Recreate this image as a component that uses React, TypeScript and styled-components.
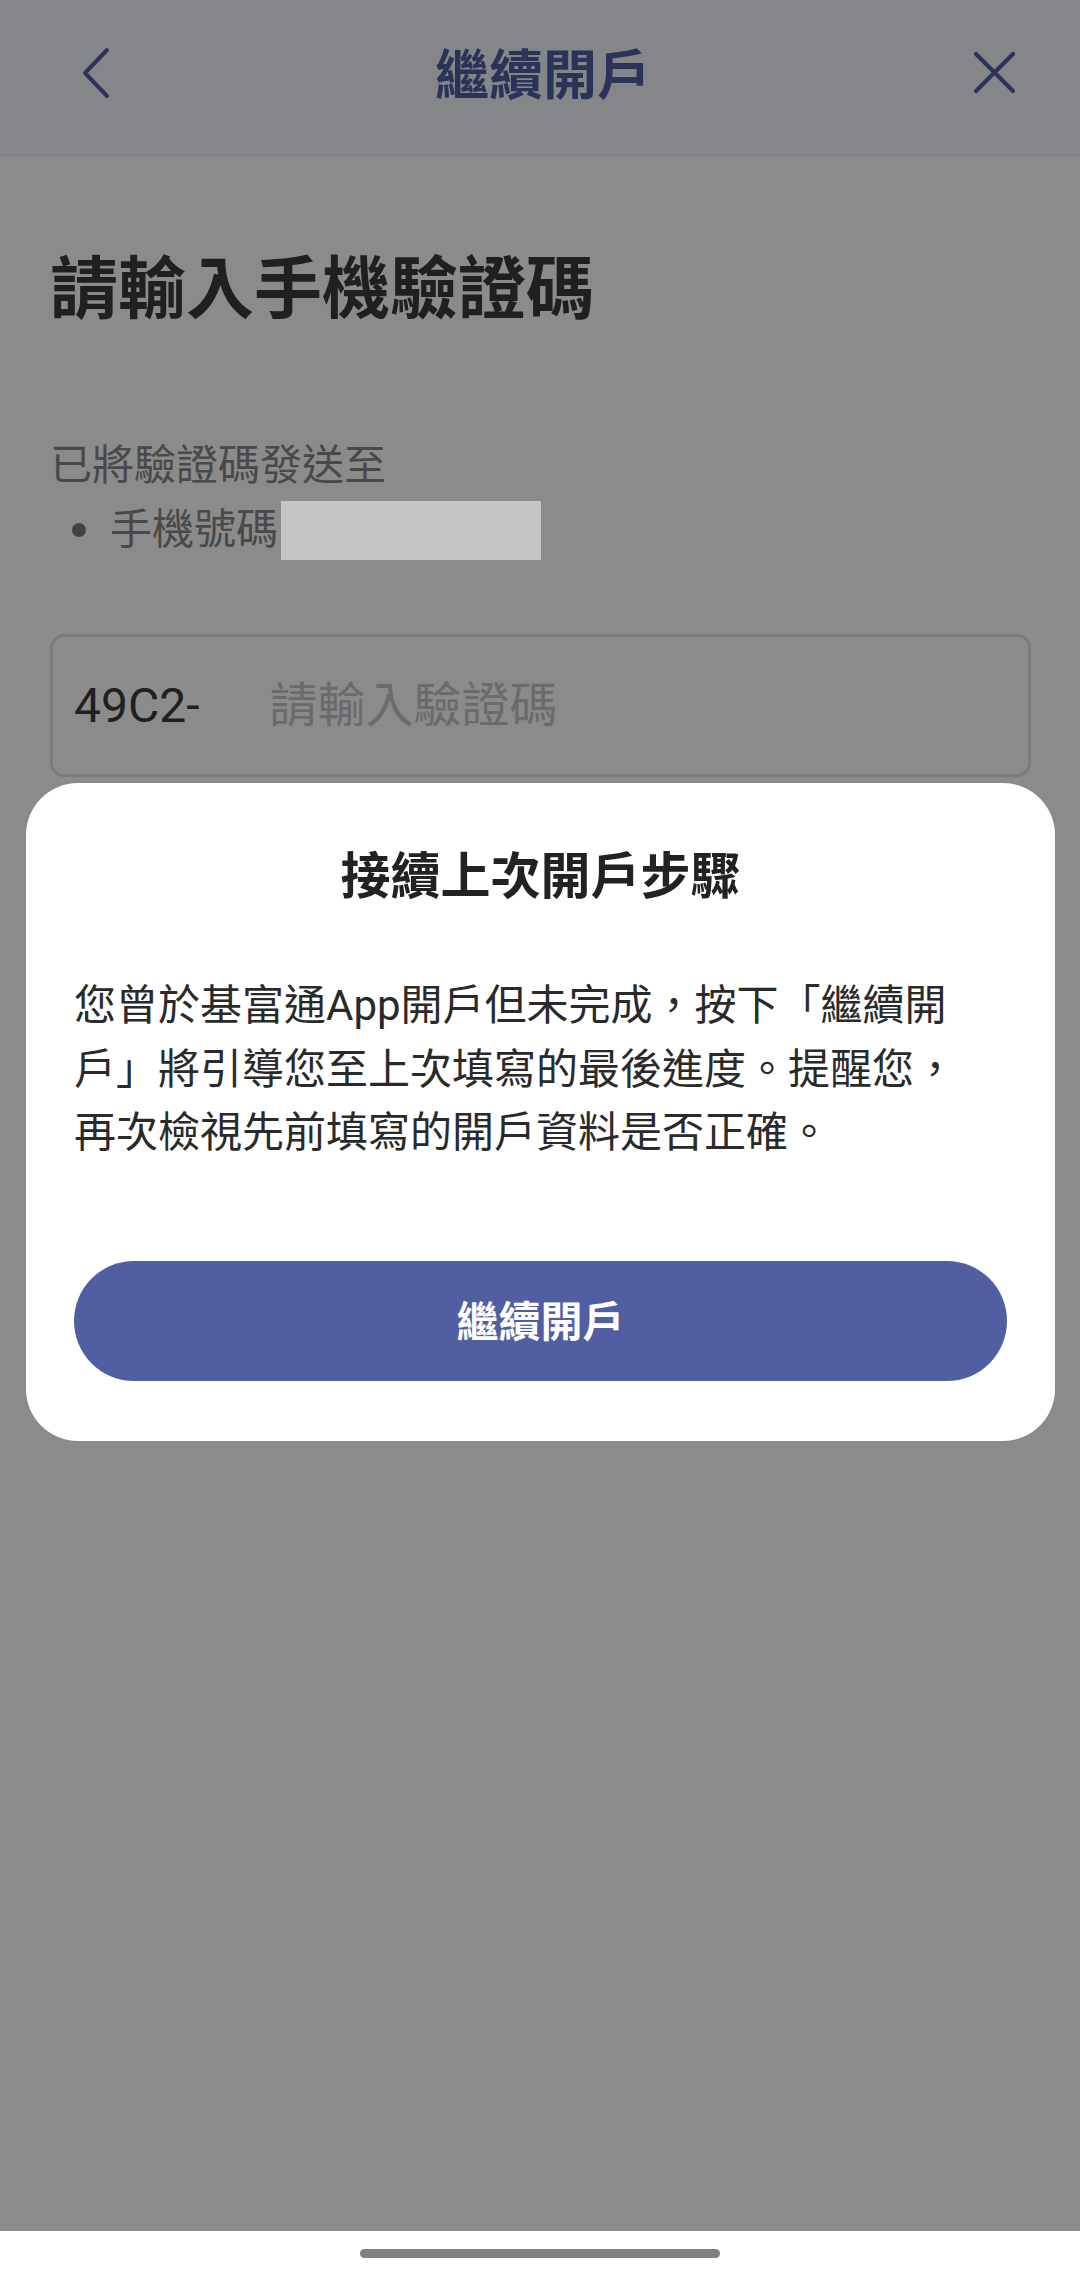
import styled, { createGlobalStyle } from "styled-components";

const GlobalStyle = createGlobalStyle`
    * { box-sizing: border-box; }
    body {
        margin: 0;
        font-family: Roboto, "Noto Sans CJK TC", sans-serif;
        background: #ffffff;
    }
`;

const Screen = styled.div`
    width: 1080px;
    height: 2279px;
    display: flex;
    flex-direction: column;
    overflow: hidden;
`;

const Page = styled.div`
    position: relative;
    height: 2231px;
    background: #ffffff;
    display: flex;
    flex-direction: column;
`;

const Header = styled.header`
    height: 156px;
    padding: 0 64px 10px 70px;
    display: grid;
    grid-template-columns: 1fr auto 1fr;
    align-items: center;
    background: #f4f6fb;
    border-bottom: 1px solid #e6e8ee;
`;

const IconButton = styled.button<{ $end?: boolean }>`
    border: none;
    background: none;
    padding: 0;
    margin-left: ${(p) => (p.$end ? "0" : "11px")};
    display: flex;
    justify-self: ${(p) => (p.$end ? "end" : "start")};
    color: #515fa2;
`;

const Title = styled.h1`
    margin: 8px 0 0;
    font-size: 54px;
    font-weight: 700;
    line-height: 64px;
    color: #515fa2;
`;

const Content = styled.main`
    padding: 94px 49px 0 50px;
    display: flex;
    flex-direction: column;
`;

const Heading = styled.h2`
    margin: 0;
    font-size: 68px;
    line-height: 80px;
    font-weight: 700;
    color: #3c3c3c;
`;

const SentTo = styled.p`
    margin: 104px 0 0;
    font-size: 42px;
    line-height: 64px;
    color: #868686;
`;

const Recipients = styled.ul`
    margin: 0;
    padding: 0 0 0 22px;
    list-style: none;
`;

const RecipientItem = styled.li`
    display: flex;
    align-items: center;
    gap: 24px;
    font-size: 42px;
    line-height: 64px;
    color: #868686;
`;

const Dot = styled.span`
    flex: none;
    width: 14px;
    height: 14px;
    border-radius: 50%;
    background: #7a7a7a;
`;

const Label = styled.span`
    display: flex;
    align-items: center;
`;

const Masked = styled.span`
    position: relative;
    z-index: 3;
    width: 260px;
    height: 59px;
    margin-left: 3px;
    background: #c4c4c4;
`;

const CodeField = styled.label`
    margin-top: 72px;
    height: 143px;
    border: 3px solid #e2e2e2;
    border-radius: 14px;
    padding: 0 21px;
    display: flex;
    align-items: center;
    gap: 70px;
`;

const Prefix = styled.span`
    font-family: Roboto, sans-serif;
    font-size: 48px;
    color: #3c3c3c;
`;

const CodeInput = styled.input`
    flex: 1;
    border: none;
    outline: none;
    background: transparent;
    padding: 0;
    font-family: Roboto, "Noto Sans CJK TC", sans-serif;
    font-size: 48px;
    color: #3c3c3c;
    &::placeholder {
        color: #c4c4c4;
    }
`;

const Overlay = styled.div`
    position: absolute;
    inset: 0;
    z-index: 2;
    background: rgba(0, 0, 0, 0.455);
    padding: 783px 25px 0 26px;
    display: flex;
    flex-direction: column;
    align-items: stretch;
`;

const Dialog = styled.section`
    background: #ffffff;
    border-radius: 52px;
    padding: 62px 48px 60px;
    display: flex;
    flex-direction: column;
`;

const DialogTitle = styled.h3`
    margin: 0;
    text-align: center;
    font-size: 50px;
    line-height: 65px;
    font-weight: 700;
    color: #222222;
`;

const Message = styled.p`
    margin: 64px 0 0;
    max-width: 905px;
    font-size: 42px;
    line-height: 63.5px;
    color: #2a2a2a;
`;

const PrimaryButton = styled.button`
    margin-top: 96px;
    height: 120px;
    padding: 0 0 4px;
    border: none;
    border-radius: 60px;
    background: #515fa2;
    color: #ffffff;
    font-family: Roboto, "Noto Sans CJK TC", sans-serif;
    font-size: 42px;
    font-weight: 700;
`;

const NavBar = styled.div`
    height: 48px;
    background: #ffffff;
    display: flex;
    justify-content: center;
    padding-top: 18px;
`;

const Handle = styled.div`
    width: 360px;
    height: 9px;
    border-radius: 5px;
    background: #808080;
`;

const BackIcon = () => (
    <svg width="30" height="52" viewBox="0 0 30 52" fill="none">
        <polyline points="26,3 4,26 26,49" stroke="currentColor" strokeWidth="4" strokeLinecap="round" strokeLinejoin="round" />
    </svg>
);

const CloseIcon = () => (
    <svg width="43" height="43" viewBox="0 0 43 43" fill="none">
        <path d="M3 3 L40 40 M40 3 L3 40" stroke="currentColor" strokeWidth="4.2" strokeLinecap="round" />
    </svg>
);

export default function App() {
    return <Screen>
        <GlobalStyle />
        <Page>
            <Header>
                <IconButton aria-label="返回"><BackIcon /></IconButton>
                <Title>繼續開戶</Title>
                <IconButton $end aria-label="關閉"><CloseIcon /></IconButton>
            </Header>
            <Content>
                <Heading>請輸入手機驗證碼</Heading>
                <SentTo>已將驗證碼發送至</SentTo>
                <Recipients>
                    <RecipientItem>
                        <Dot />
                        <Label>手機號碼<Masked /></Label>
                    </RecipientItem>
                </Recipients>
                <CodeField>
                    <Prefix>49C2-</Prefix>
                    <CodeInput placeholder="請輸入驗證碼" />
                </CodeField>
            </Content>
            <Overlay>
                <Dialog>
                    <DialogTitle>接續上次開戶步驟</DialogTitle>
                    <Message>
                        您曾於基富通App開戶但未完成，按下「繼續開戶」將引導您至上次填寫的最後進度。提醒您，再次檢視先前填寫的開戶資料是否正確。
                    </Message>
                    <PrimaryButton>繼續開戶</PrimaryButton>
                </Dialog>
            </Overlay>
        </Page>
        <NavBar><Handle /></NavBar>
    </Screen>;
}
